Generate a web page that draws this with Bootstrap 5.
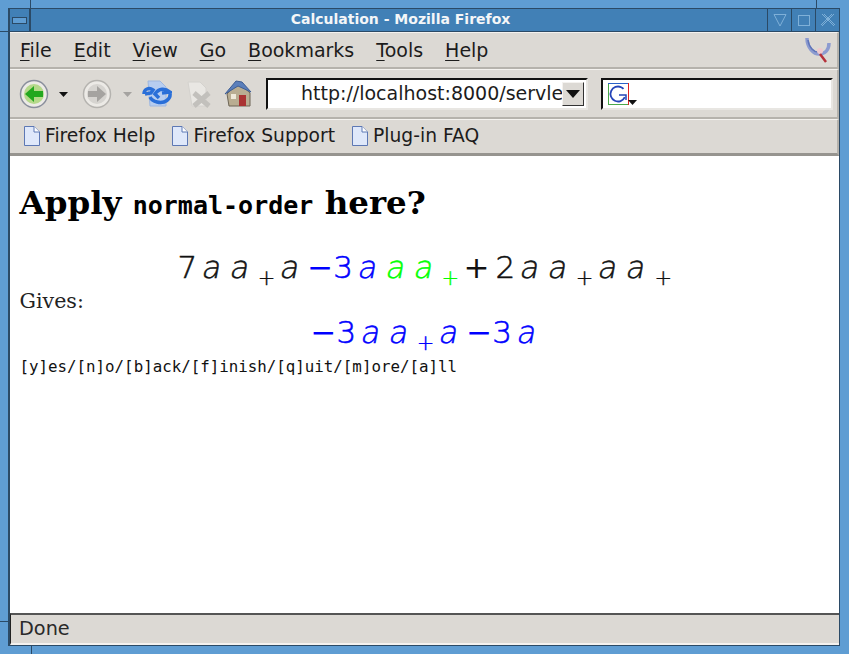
<!DOCTYPE html>
<html lang="en">
<head>
<meta charset="utf-8">
<title>Calculation - Mozilla Firefox</title>
<link rel="stylesheet" href="https://cdn.jsdelivr.net/npm/bootstrap@5.3.0/dist/css/bootstrap.min.css">
<style>
html,body{height:654px;overflow:hidden}
body{width:849px;background:#5f9dd3;font-family:"DejaVu Sans",sans-serif;color:#1c1c1c}
.wm-frame{height:654px;padding:8px 9px 8px 8px;position:relative}
.wm-inner{height:100%;border:1px solid #2b4a66;border-left-width:2px;background:#dcd9d4;display:flex;flex-direction:column}
.wm-handle{position:absolute;background:#2b4a66}
.h-a{left:30px;top:0;width:1px;height:32px}
.h-b{left:0;top:31px;width:32px;height:1px}
.h-c{left:816px;top:0;width:1px;height:9px}
.h-d{left:31px;bottom:0;width:1px;height:8px}
.h-e{left:0;bottom:32px;width:9px;height:1px}
.titlebar{height:23px;background:#4180b6;border-bottom:1px solid #2b4a66;color:#f4f6f8;font-weight:700;font-size:14px;line-height:21px;flex:none}
.tb-btn{width:24px;height:22px;border-left:1px solid #2b4a66;display:flex;align-items:center;justify-content:center;flex:none}
.tb-left{width:20px;height:22px;border-right:1px solid #2b4a66;display:flex;align-items:center;justify-content:center;flex:none}
.tb-title{flex:1;text-align:center;padding-left:4px}
.tbar{border-top:1px solid #f4f2ef;border-bottom:2px solid #b5b2ac;flex:none;background:#dcd9d4;border-right:2px solid #b5b2ac}
.menu-row{height:37px;font-size:19px;line-height:35px;padding-left:10px;position:relative}
.menu-row span.mi{margin-right:22px;display:inline-block}
.menu-row u{text-underline-offset:3px;text-decoration-thickness:1px}
.nav-row{height:50px;padding-left:9px;align-items:center}
.nav-ico{flex:none;display:block}
.m-8{margin-left:8px}.m-9{margin-left:9px}.m-12{margin-left:12px}.m-13{margin-left:13px}
.url-box{width:322px;height:32px;margin-left:13px;border:2px solid #111;border-right-color:#e8e6e2;border-bottom-color:#e8e6e2;background:#fff;font-size:19px;line-height:27px;padding-left:33px;white-space:nowrap;overflow:hidden;position:relative;flex:none}
.url-drop{position:absolute;right:2px;top:2px;width:22px;height:24px;background:#dcd9d4;border:1px solid #333;border-left-color:#f4f2ef;border-top-color:#f4f2ef;display:flex;align-items:center;justify-content:center}
.search-box{width:232px;height:32px;margin-left:13px;border:2px solid #111;border-right-color:#e8e6e2;border-bottom-color:#e8e6e2;background:#fff;padding:3px 0 0 5px;flex:none;position:relative}
.g-ico{width:21px;height:22px;display:block}
.g-drop{left:25px;top:20px}
.fx-logo{right:6px;top:3px}
.bm-row{height:37px;font-size:18.7px;padding-left:13px;gap:16px;align-items:center;border-bottom:3px solid #96948f}
.bm-item{display:flex;align-items:center;gap:4px;white-space:nowrap}
.page-area{flex:1;background:#fff;padding:0 9.5px;font-family:"DejaVu Serif",serif;color:#000;min-height:0}
.page-head{font-family:"DejaVu Serif",serif;font-weight:700;font-size:32.5px;margin:27px 0 0;line-height:40px;color:#000}
.page-head code{font-family:"DejaVu Sans Mono",monospace;font-size:25px;color:#000;font-weight:700}
.math-line{display:flex;justify-content:center;align-items:baseline;font-family:"DejaVu Sans",sans-serif;font-weight:200;font-size:31px;line-height:34px;white-space:nowrap;height:34px;color:#111;-webkit-text-stroke:.55px currentColor;padding-left:2px}
.math-line span{margin-right:1px}
.math-line i{font-style:normal;margin:0 4.5px;transform:skewX(-11deg)}
.math-line b{font-weight:400;-webkit-text-stroke:0;margin-left:2.5px}
.math-line b.op-plus{margin:0 6px 0 3px}
.math-line sub{font-size:21px;position:relative;top:7px;bottom:auto;line-height:0;margin:0 1.5px 0 3.5px;vertical-align:baseline;-webkit-text-stroke:.4px currentColor}
.math-first{margin-top:24px}
.gives{font-size:20.6px;line-height:24px;color:#222;margin-top:5px}
.prompt{font-family:"DejaVu Sans Mono",monospace;font-size:15.8px;line-height:20px;color:#111;margin-top:8px}
.math-second{margin-top:2px;padding-left:0}
.math-second,.math-second *{color:#00f}
.c-b{color:#00f}.c-g{color:#0f0}
.status{height:32px;flex:none;border-top:2px solid #555;border-left:1px solid #222;background:#dcd9d4;border-bottom:2px solid #f4f2ef;font-size:19.300px;line-height:27px;padding-left:8px;color:#2a2a2a}
</style>
</head>
<body>
<div class="wm-frame">
  <div class="wm-handle h-a"></div><div class="wm-handle h-b"></div><div class="wm-handle h-c"></div><div class="wm-handle h-d"></div><div class="wm-handle h-e"></div>
  <div class="wm-inner">
    <div class="titlebar d-flex">
      <div class="tb-left"><svg width="15" height="7"><rect x=".5" y=".5" width="14" height="6" fill="#5f9dd3" stroke="#2b4a66"/></svg></div>
      <div class="tb-title">Calculation - Mozilla Firefox</div>
      <div class="tb-btn"><svg width="14" height="14"><path d="M1 1.500H13L7 13Z" fill="none" stroke="#7fb0d8"/></svg></div>
      <div class="tb-btn"><svg width="14" height="14"><rect x="1.500" y="2.500" width="11" height="10" fill="none" stroke="#7fb0d8"/></svg></div>
      <div class="tb-btn"><svg width="16" height="16"><path d="M2 2L14 14M14 2L2 14M4 2L15 13M12 2L1 13" fill="none" stroke="#7fb0d8"/></svg></div>
    </div>

    <div class="tbar menu-row">
      <span class="mi"><u>F</u>ile</span><span class="mi"><u>E</u>dit</span><span class="mi"><u>V</u>iew</span><span class="mi"><u>G</u>o</span><span class="mi"><u>B</u>ookmarks</span><span class="mi"><u>T</u>ools</span><span class="mi"><u>H</u>elp</span>
      <svg class="position-absolute fx-logo" width="26" height="27" viewBox="0 0 26 27"><path d="M2 2C2 12 9 18 14 18C20 18 24 14 24 7" fill="none" stroke="#8c9bd0" stroke-width="3.500"/><path d="M3 4C4 12 9 16 13 16" fill="none" stroke="#5f74b8" stroke-width="1.500"/><circle cx="15" cy="15" r="3" fill="#efc9cd"/><path d="M15 18L21 26" stroke="#b5303a" stroke-width="2.500"/></svg>
    </div>

    <div class="tbar nav-row d-flex">
      <svg class="nav-ico" width="30" height="30" viewBox="0 0 30 30"><circle cx="15" cy="15" r="13.500" fill="#eceae6" stroke="#8a8f9c" stroke-width="1.500"/><circle cx="15" cy="15" r="10" fill="#b5d98a"/><path d="M6 15L15 7V12H24V18H15V23Z" fill="#23a81f"/></svg>
      <svg class="nav-ico m-8" width="12" height="30" viewBox="0 0 12 30"><path d="M2 13H11L6.500 18Z" fill="#111"/></svg>
      <svg class="nav-ico m-13" width="30" height="30" viewBox="0 0 30 30"><circle cx="15" cy="15" r="13.500" fill="#eceae6" stroke="#b5b3af" stroke-width="1.500"/><circle cx="15" cy="15" r="10" fill="#d6d4d0"/><path d="M24 15L15 7V12H6V18H15V23Z" fill="#a5a3a0"/></svg>
      <svg class="nav-ico m-9" width="12" height="30" viewBox="0 0 12 30"><path d="M2 13H11L6.500 18Z" fill="#a5a3a0"/></svg>
      <svg class="nav-ico m-9" width="30" height="30" viewBox="0 0 30 30"><path d="M6 2H18L24 8V27H8Z" fill="#b7cdf0" stroke="#9fb8e0"/><path d="M2 15C2 10 7 8 11 11L9 14L3 15M28 14C29 20 23 25 15 23C11 22 9 20 8 18M17 19L13 15C17 9 23 9 28 13L20 14" fill="none" stroke="#2a6fd8" stroke-width="3.500"/></svg>
      <svg class="nav-ico m-12" width="30" height="30" viewBox="0 0 30 30"><path d="M4 3H16L22 9V27H8Z" fill="#e9e7e3" stroke="#d4d2ce"/><path d="M10 14L25 27M25 14L10 27" stroke="#c2c0bc" stroke-width="5"/></svg>
      <svg class="nav-ico m-9" width="30" height="30" viewBox="0 0 30 30"><path d="M4 15L15 3L27 14V27H6Z" fill="#b9ad92" stroke="#6d6555"/><path d="M2 15L13 2L19 3L28 13L15 7Z" fill="#5b7fbb" stroke="#3e5d93"/><rect x="16" y="16" width="7" height="11" fill="#a33"/><rect x="8" y="15" width="5" height="5" fill="#efe9da"/></svg>
      <div class="url-box">http://localhost:8000/servlet
        <div class="url-drop"><svg width="14" height="8"><path d="M0 0H14L7 8Z" fill="#111"/></svg></div>
      </div>
      <div class="search-box">
        <svg class="g-ico" viewBox="0 0 21 22"><rect x=".5" y=".5" width="20" height="21" fill="#fff" stroke="#4aa84a"/><path d="M20.500 0V22" stroke="#d22"/><path d="M0 .5H20" stroke="#2a62c8"/><circle cx="10" cy="11" r="7.500" fill="none" stroke="#2444b8" stroke-width="1.800" stroke-dasharray="38 9" transform="rotate(25 10 11)"/><path d="M11 12H18V17" fill="none" stroke="#2444b8" stroke-width="1.500"/></svg>
        <svg class="position-absolute g-drop" width="9" height="5"><path d="M0 0H9L4.500 5Z" fill="#111"/></svg>
      </div>
    </div>

    <div class="tbar bm-row d-flex">
      <div class="bm-item"><svg width="18" height="22" viewBox="0 0 18 22"><path d="M1.500 1.500H11L16.500 7V20.500H1.500Z" fill="#dfe8fa" stroke="#5d78b4"/><path d="M11 1.500V7H16.500" fill="#fff" stroke="#5d78b4"/></svg>Firefox Help</div>
      <div class="bm-item"><svg width="18" height="22" viewBox="0 0 18 22"><path d="M1.500 1.500H11L16.500 7V20.500H1.500Z" fill="#dfe8fa" stroke="#5d78b4"/><path d="M11 1.500V7H16.500" fill="#fff" stroke="#5d78b4"/></svg>Firefox Support</div>
      <div class="bm-item"><svg width="18" height="22" viewBox="0 0 18 22"><path d="M1.500 1.500H11L16.500 7V20.500H1.500Z" fill="#dfe8fa" stroke="#5d78b4"/><path d="M11 1.500V7H16.500" fill="#fff" stroke="#5d78b4"/></svg>Plug-in FAQ</div>
    </div>

    <div class="page-area">
      <h1 class="page-head">Apply <code>normal-order</code> here?</h1>
      <div class="math-line math-first"><span>7</span><i>a</i><i>a</i><sub>+</sub><i>a</i><b class="c-b">−</b><span class="c-b">3</span><i class="c-b">a</i><i class="c-g">a</i><i class="c-g">a</i><sub class="c-g">+</sub><b class="op-plus">+</b><span>2</span><i>a</i><i>a</i><sub>+</sub><i>a</i><i>a</i><sub>+</sub></div>
      <div class="gives">Gives:</div>
      <div class="math-line math-second"><b>−</b><span>3</span><i>a</i><i>a</i><sub>+</sub><i>a</i><b>−</b><span>3</span><i>a</i></div>
      <div class="prompt">[y]es/[n]o/[b]ack/[f]inish/[q]uit/[m]ore/[a]ll</div>
    </div>

    <div class="status">Done</div>
  </div>
</div>
<script src="https://cdn.jsdelivr.net/npm/bootstrap@5.3.0/dist/js/bootstrap.bundle.min.js"></script>
</body>
</html>
